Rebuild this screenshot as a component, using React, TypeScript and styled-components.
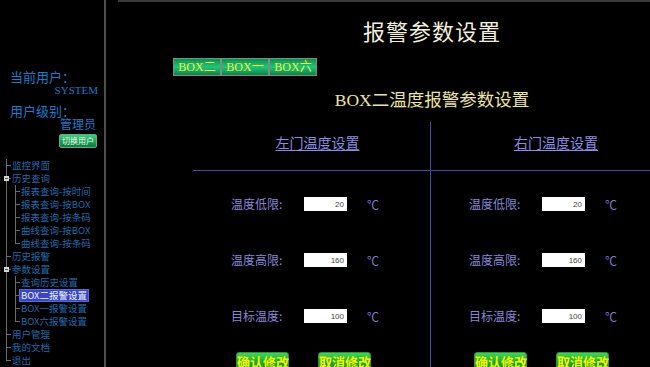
import React from 'react';
import styled, { createGlobalStyle } from 'styled-components';

const GlobalStyle = createGlobalStyle`
  html, body { margin: 0; padding: 0; background: #000; }
  body { font-family: "Noto Sans CJK SC", "Noto Sans", sans-serif; }
  #root { width: 650px; height: 367px; }
`;

const SERIF = `"Liberation Serif", "Noto Sans CJK SC", serif`;
const SANS = `"Noto Sans CJK SC", "Liberation Sans", sans-serif`;
const LINE = '#6c6c6c';

const Page = styled.div`
  display: flex;
  width: 650px;
  height: 367px;
  overflow: hidden;
  background: #000;
`;

const Sidebar = styled.aside`
  flex: none;
  width: 104px;
  border-right: 2px solid #4e4e4e;
  display: flex;
  flex-direction: column;
  font-family: ${SANS};
`;

const UserBlock = styled.div`
  display: flex;
  flex-direction: column;
  padding-top: 70px;
  padding-left: 10px;
`;

const InfoLabel = styled.div<{ $gap?: number }>`
  font-size: 13px;
  line-height: 14px;
  color: #1a7ccc;
  margin-top: ${p => p.$gap ?? 0}px;
  white-space: nowrap;
`;

const InfoValue = styled.div<{ $serif?: boolean; $right: number }>`
  align-self: flex-end;
  margin-right: ${p => p.$right}px;
  font-family: ${p => (p.$serif ? SERIF : SANS)};
  font-size: ${p => (p.$serif ? 11 : 12)}px;
  line-height: 12px;
  color: #1a7ccc;
  white-space: nowrap;
`;

const SwitchButton = styled.button`
  align-self: flex-end;
  margin: 4px 7px 0 0;
  width: 38px;
  height: 14px;
  padding: 0;
  border: 1px solid #6aa882;
  border-radius: 2px;
  background: linear-gradient(to bottom, #3fcf7c, #17a055 55%, #0e7c40);
  color: #eef8ee;
  font-family: ${SANS};
  font-size: 8px;
  line-height: 12px;
  white-space: nowrap;
`;

const Tree = styled.ul`
  list-style: none;
  margin: 11px 0 0 0;
  padding: 0;
`;

const TreeRow = styled.li`
  display: flex;
  align-items: center;
  height: 13px;
  overflow: visible;
`;

const Indent = styled.span`
  flex: none;
  width: 9px;
  height: 13px;
  background: linear-gradient(${LINE}, ${LINE}) no-repeat 6px 0 / 1px 100%;
`;

const Branch = styled.span<{ $last?: boolean }>`
  position: relative;
  flex: none;
  width: 11px;
  height: 13px;
  background:
    linear-gradient(${LINE}, ${LINE}) no-repeat 6px 0 / 1px ${p => (p.$last ? '7px' : '100%')},
    linear-gradient(${LINE}, ${LINE}) no-repeat 6px 6px / 5px 1px;
`;

const Expander = styled.span`
  position: absolute;
  left: 4px;
  top: 4px;
  width: 5px;
  height: 5px;
  background: #d6d6d6;
  &::after {
    content: '';
    position: absolute;
    left: 1px;
    top: 2px;
    width: 3px;
    height: 1px;
    background: #555;
  }
`;

const TreeText = styled.span<{ $active?: boolean }>`
  display: inline-block;
  font-size: 9.5px;
  height: 11px;
  line-height: 11px;
  padding: 0 1px;
  white-space: nowrap;
  color: ${p => (p.$active ? '#eef2ff' : '#2468a8')};
  background: ${p => (p.$active ? '#3846c6' : 'transparent')};
  outline: ${p => (p.$active ? '1px solid #5a66dc' : 'none')};
`;

const Main = styled.main`
  flex: none;
  width: 628px;
  margin-left: 12px;
  border-top: 2px solid #3a3a3a;
  display: flex;
  flex-direction: column;
`;

const Title = styled.h1`
  margin: 16px 0 0 0;
  text-align: center;
  font-family: ${SANS};
  font-weight: 400;
  font-size: 22px;
  line-height: 24px;
  letter-spacing: 1px;
  color: #f2eedc;
`;

const TabBar = styled.div`
  display: flex;
  margin-top: 16px;
  padding-left: 55px;
`;

const Tab = styled.button`
  width: 48px;
  height: 18px;
  padding: 0;
  border: 1px solid #7d8f82;
  background: linear-gradient(to bottom, #0b9050, #22c479 50%, #0a8248);
  color: #f2f03c;
  font-family: ${SERIF};
  font-size: 12px;
  line-height: 16px;
  white-space: nowrap;
`;

const Subtitle = styled.h2`
  margin: 13px 0 0 0;
  text-align: center;
  font-family: ${SERIF};
  font-weight: 400;
  font-size: 17.5px;
  line-height: 22px;
  color: #ece4a6;
`;

const Panel = styled.section`
  margin: 11px 0 0 75px;
  width: 476px;
  display: grid;
  grid-template-columns: 238px 238px;
`;

const Half = styled.div<{ $divider?: boolean }>`
  display: flex;
  flex-direction: column;
  border-right: ${p => (p.$divider ? '1px solid #4a4aa6' : 'none')};
`;

const HalfHeader = styled.div`
  height: 41px;
  padding: 7px 0 0 12px;
  text-align: center;
  border-bottom: 1px solid #4a4aa6;
`;

const Heading = styled.a`
  font-family: ${SANS};
  font-size: 14px;
  line-height: 18px;
  color: #8c8ce8;
  text-decoration: underline;
  text-underline-offset: 2px;
`;

const Rows = styled.div`
  display: flex;
  flex-direction: column;
  padding-top: 5px;
`;

const FieldRow = styled.div`
  display: flex;
  align-items: center;
  height: 56px;
  padding-left: 38px;
`;

const FieldLabel = styled.label`
  width: 73px;
  font-family: ${SANS};
  font-size: 12px;
  line-height: 14px;
  color: #8686d8;
  white-space: nowrap;
`;

const FieldInput = styled.input`
  width: 43px;
  height: 14px;
  box-sizing: border-box;
  border: none;
  padding: 0 3px;
  background: #fff;
  text-align: right;
  font-family: "Liberation Sans", sans-serif;
  font-size: 8px;
  color: #444;
  outline: none;
`;

const Unit = styled.span`
  margin-left: 20px;
  font-family: ${SANS};
  font-size: 12px;
  color: #7a7ad4;
`;

const Actions = styled.div`
  display: flex;
  gap: 29px;
  margin-top: 8px;
  padding-left: 43px;
`;

const ActionButton = styled.button`
  width: 53px;
  height: 20px;
  padding: 0;
  border: 1px solid #3d8a46;
  border-radius: 3px;
  background: linear-gradient(to bottom, #3fd552, #16a83a 55%, #0b8a2a);
  color: #f4f400;
  font-family: ${SANS};
  font-weight: 700;
  font-size: 13px;
  line-height: 18px;
  white-space: nowrap;
`;

type TreeItem = { label: string; depth: 0 | 1; last?: boolean; expander?: boolean; active?: boolean };

const treeItems: TreeItem[] = [
  { label: '监控界面', depth: 0 },
  { label: '历史查询', depth: 0, expander: true },
  { label: '报表查询-按时间', depth: 1 },
  { label: '报表查询-按BOX', depth: 1 },
  { label: '报表查询-按条码', depth: 1 },
  { label: '曲线查询-按BOX', depth: 1 },
  { label: '曲线查询-按条码', depth: 1, last: true },
  { label: '历史报警', depth: 0 },
  { label: '参数设置', depth: 0, expander: true },
  { label: '查询历史设置', depth: 1 },
  { label: 'BOX二报警设置', depth: 1, active: true },
  { label: 'BOX一报警设置', depth: 1 },
  { label: 'BOX六报警设置', depth: 1, last: true },
  { label: '用户管理', depth: 0 },
  { label: '我的文档', depth: 0 },
  { label: '退出', depth: 0, last: true },
];

const fields = [
  { label: '温度低限:', value: '20' },
  { label: '温度高限:', value: '160' },
  { label: '目标温度:', value: '100' },
];

const DoorPanel: React.FC<{ title: string; divider?: boolean }> = ({ title, divider }) => (
  <Half $divider={divider}>
    <HalfHeader>
      <Heading>{title}</Heading>
    </HalfHeader>
    <Rows>
      {fields.map(f => (
        <FieldRow key={f.label}>
          <FieldLabel>{f.label}</FieldLabel>
          <FieldInput defaultValue={f.value} />
          <Unit>℃</Unit>
        </FieldRow>
      ))}
    </Rows>
    <Actions>
      <ActionButton>确认修改</ActionButton>
      <ActionButton>取消修改</ActionButton>
    </Actions>
  </Half>
);

export default function App() {
  return (
    <>
      <GlobalStyle />
      <Page>
        <Sidebar>
          <UserBlock>
            <InfoLabel>当前用户：</InfoLabel>
            <InfoValue $serif $right={6}>SYSTEM</InfoValue>
            <InfoLabel $gap={8}>用户级别：</InfoLabel>
            <InfoValue $right={8}>管理员</InfoValue>
            <SwitchButton>切换用户</SwitchButton>
          </UserBlock>
          <Tree>
            {treeItems.map(item => (
              <TreeRow key={item.label}>
                {item.depth === 1 && <Indent />}
                <Branch $last={item.last}>{item.expander && <Expander />}</Branch>
                <TreeText $active={item.active}>{item.label}</TreeText>
              </TreeRow>
            ))}
          </Tree>
        </Sidebar>
        <Main>
          <Title>报警参数设置</Title>
          <TabBar>
            <Tab>BOX二</Tab>
            <Tab>BOX一</Tab>
            <Tab>BOX六</Tab>
          </TabBar>
          <Subtitle>BOX二温度报警参数设置</Subtitle>
          <Panel>
            <DoorPanel title="左门温度设置" divider />
            <DoorPanel title="右门温度设置" />
          </Panel>
        </Main>
      </Page>
    </>
  );
}
